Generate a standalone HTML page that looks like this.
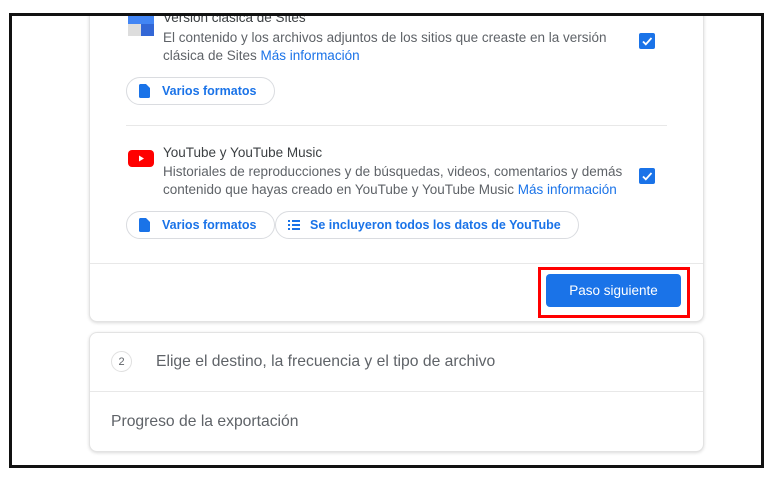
<!DOCTYPE html>
<html><head><meta charset="utf-8"><style>
*{margin:0;padding:0;box-sizing:border-box}
body{width:771px;height:484px;background:#fff;position:relative;overflow:hidden;font-family:"Liberation Sans",Arial,sans-serif;color:#5f6368}
.frame{position:absolute;left:9px;top:13px;width:755px;height:455px;border:3px solid #111;overflow:hidden;background:#fff}
.a{position:absolute}
.card{position:absolute;background:#fff;border:1px solid #e3e3e3;border-radius:8px;box-shadow:0 1px 3px rgba(0,0,0,.15)}
.t{font-size:13.5px;color:#5f6368;white-space:nowrap}
.lk{color:#1a73e8}
.chip{position:absolute;height:28px;border:1px solid #dadce0;border-radius:14px;font-size:12.5px;color:#1a73e8;font-weight:bold;display:flex;align-items:center;padding-left:12px;white-space:nowrap}
.cb{position:absolute;width:16px;height:16px;background:#1a73e8;border-radius:2px}
</style></head><body>
<div class="frame">
<div class="card" style="left:77px;top:-20px;width:615px;height:326px;border-top:none;border-radius:0 0 8px 8px"></div>
<div class="card" style="left:77px;top:316px;width:615px;height:120px"></div>
</div>
<div class="a" style="left:128px;top:14px;width:26px;height:22px">
<div class="a" style="left:0;top:0;width:26px;height:10px;background:#4285f4"></div>
<div class="a" style="left:13px;top:10px;width:13px;height:12px;background:#3367d6"></div>
<div class="a" style="left:0;top:10px;width:13px;height:12px;background:#ddd"></div>
</div>
<div class="a t" style="left:163px;top:10px;color:#3c4043">Versión clásica de Sites</div>
<div class="a" style="left:0;top:0;width:771px;height:13px;background:#fff"></div>
<div class="a" style="left:9px;top:13px;width:755px;height:3px;background:#111"></div>
<div class="a t" style="left:163px;top:29px;line-height:18px">El contenido y los archivos adjuntos de los sitios que creaste en la versión<br>clásica de Sites <span class="lk">Más información</span></div>
<div class="cb" style="left:639px;top:33px"><svg width="16" height="16"><path d="M4 8.5l2.8 2.8L12.5 5" stroke="#fff" stroke-width="1.8" fill="none"/></svg></div>
<div class="chip" style="left:126px;top:77px;width:149px"><svg width="11" height="14" style="margin-right:12px"><path d="M0 1.5C0 .7.6 0 1.4 0H7l4 4v8.6c0 .8-.6 1.4-1.4 1.4H1.4C.6 14 0 13.4 0 12.6z" fill="#1a73e8"/></svg>Varios formatos</div>
<div class="a" style="left:126px;top:125px;width:541px;height:1px;background:#e8e8e8"></div>
<div class="a" style="left:128px;top:150px;width:26px;height:17px;background:#f00;border-radius:4px"><svg width="26" height="17"><path d="M11 5.5l5 3-5 3z" fill="#fff"/></svg></div>
<div class="a t" style="left:163px;top:145px;color:#3c4043">YouTube y YouTube Music</div>
<div class="a t" style="left:163px;top:163px;line-height:18px">Historiales de reproducciones y de búsquedas, videos, comentarios y demás<br>contenido que hayas creado en YouTube y YouTube Music <span class="lk">Más información</span></div>
<div class="cb" style="left:639px;top:168px"><svg width="16" height="16"><path d="M4 8.5l2.8 2.8L12.5 5" stroke="#fff" stroke-width="1.8" fill="none"/></svg></div>
<div class="chip" style="left:126px;top:211px;width:149px"><svg width="11" height="14" style="margin-right:12px"><path d="M0 1.5C0 .7.6 0 1.4 0H7l4 4v8.6c0 .8-.6 1.4-1.4 1.4H1.4C.6 14 0 13.4 0 12.6z" fill="#1a73e8"/></svg>Varios formatos</div>
<div class="chip" style="left:275px;top:211px;width:304px"><svg width="12" height="10" style="margin-right:10px"><path d="M0 1h2M4 1h8M0 5h2M4 5h8M0 9h2M4 9h8" stroke="#1a73e8" stroke-width="2"/></svg>Se incluyeron todos los datos de YouTube</div>
<div class="a" style="left:90px;top:263px;width:613px;height:1px;background:#e8e8e8"></div>
<div class="a" style="left:538px;top:267px;width:152px;height:51px;border:3px solid #f00"></div>
<div class="a" style="left:546px;top:274px;width:135px;height:33px;background:#1a73e8;border-radius:4px;color:#fff;font-size:13.5px;display:flex;align-items:center;justify-content:center">Paso siguiente</div>
<div class="a" style="left:111px;top:351px;width:21px;height:21px;border:1px solid #e0e0e0;border-radius:50%;font-size:11px;display:flex;align-items:center;justify-content:center">2</div>
<div class="a" style="left:156px;top:353px;font-size:15.7px;color:#5f6368;white-space:nowrap">Elige el destino, la frecuencia y el tipo de archivo</div>
<div class="a" style="left:90px;top:391px;width:613px;height:1px;background:#e8e8e8"></div>
<div class="a" style="left:111px;top:413px;font-size:15.7px;color:#5f6368;white-space:nowrap">Progreso de la exportación</div>
</body></html>
